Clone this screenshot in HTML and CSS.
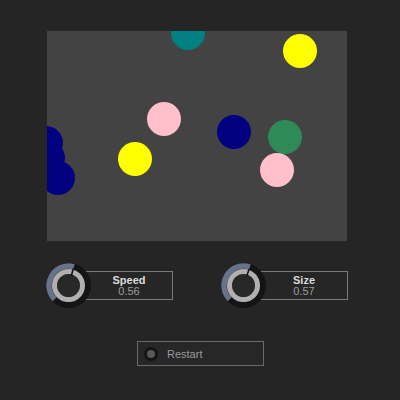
FILE: index.html
```html
<!DOCTYPE html>
<html>
<head>
<meta charset="utf-8">
<link rel="stylesheet" href="styles.css">
</head>
<body>
<div class="app">
  <svg class="stage" width="300" height="210" viewBox="0 0 300 210">
    <rect width="300" height="210" fill="#434343"/>
    <circle cx="141" cy="2" r="17" fill="#008080"/>
    <circle cx="253" cy="20" r="17" fill="#ffff00"/>
    <circle cx="117" cy="88" r="17" fill="#ffc0cb"/>
    <circle cx="187" cy="101" r="17" fill="#000080"/>
    <circle cx="238" cy="106" r="17" fill="#2e8b57"/>
    <circle cx="230" cy="139" r="17" fill="#ffc0cb"/>
    <circle cx="88" cy="128" r="17" fill="#ffff00"/>
    <circle cx="-1" cy="112" r="17" fill="#000080"/>
    <circle cx="1" cy="127" r="17" fill="#000080"/>
    <circle cx="11" cy="147" r="17" fill="#000080"/>
  </svg>
  <div class="controls">
    <div class="param">
      <svg class="knob" width="45" height="45" viewBox="0 0 45 45">
        <circle cx="22.5" cy="22.5" r="22.5" fill="#141414"/>
        <path d="M8.71 36.29 A19.5 19.5 0 0 1 27.94 3.78" fill="none" stroke="#67738a" stroke-width="5.5"/>
        <circle cx="22.5" cy="22.5" r="11.5" fill="#282828"/>
        <circle cx="22.5" cy="22.5" r="14" fill="none" stroke="#b0b0b0" stroke-width="5"/>
        <line x1="25.2" y1="12.9" x2="27.4" y2="5.5" stroke="#141414" stroke-width="1.6"/>
      </svg>
      <div class="label"><span class="name">Speed</span><span class="value">0.56</span></div>
    </div>
    <div class="param">
      <svg class="knob" width="45" height="45" viewBox="0 0 45 45">
        <circle cx="22.5" cy="22.5" r="22.5" fill="#141414"/>
        <path d="M8.71 36.29 A19.5 19.5 0 0 1 28.82 4.05" fill="none" stroke="#67738a" stroke-width="5.5"/>
        <circle cx="22.5" cy="22.5" r="11.5" fill="#282828"/>
        <circle cx="22.5" cy="22.5" r="14" fill="none" stroke="#b0b0b0" stroke-width="5"/>
        <line x1="25.7" y1="13.0" x2="28.3" y2="5.8" stroke="#141414" stroke-width="1.6"/>
      </svg>
      <div class="label"><span class="name">Size</span><span class="value">0.57</span></div>
    </div>
  </div>
  <div class="actions">
    <button class="restart"><span class="led"></span><span class="restart-text">Restart</span></button>
  </div>
</div>
</body>
</html>
```
FILE: styles.css
```css
html, body {
  margin: 0;
  padding: 0;
  background: #252525;
}
body {
  width: 400px;
  height: 400px;
  font-family: "Liberation Sans", Arial, sans-serif;
  overflow: hidden;
}
.app {
  display: flex;
  flex-direction: column;
  padding: 31px 0 0 47px;
}
.stage {
  display: block;
}
.controls {
  display: flex;
  gap: 48px;
  margin-top: 22px;
  margin-left: -1px;
}
.param {
  display: flex;
  align-items: center;
}
.knob {
  display: block;
  position: relative;
  z-index: 1;
}
.label {
  margin-left: -6px;
  width: 86px;
  height: 27px;
  border: 1px solid #7a7a7a;
  background: #262626;
  display: flex;
  flex-direction: column;
  align-items: center;
  justify-content: center;
}
.name {
  font-weight: bold;
  font-size: 11px;
  line-height: 11px;
  color: #dcdcdc;
}
.value {
  font-size: 11px;
  line-height: 11px;
  color: #9c9c9c;
}
.actions {
  display: flex;
  margin-top: 33px;
  margin-left: 90px;
}
.restart {
  display: flex;
  align-items: center;
  width: 127px;
  height: 25px;
  border: 1px solid #6a6a6a;
  background: #272727;
  padding: 0 0 0 6px;
  margin: 0;
  font-family: "Liberation Sans", Arial, sans-serif;
  font-size: 11px;
  color: #9a9a9a;
}
.led {
  width: 14px;
  height: 14px;
  border-radius: 50%;
  background: #575757;
  box-sizing: border-box;
  border: 3px solid #141414;
  margin-right: 9px;
}
.restart-text {
  line-height: 12px;
}
```
